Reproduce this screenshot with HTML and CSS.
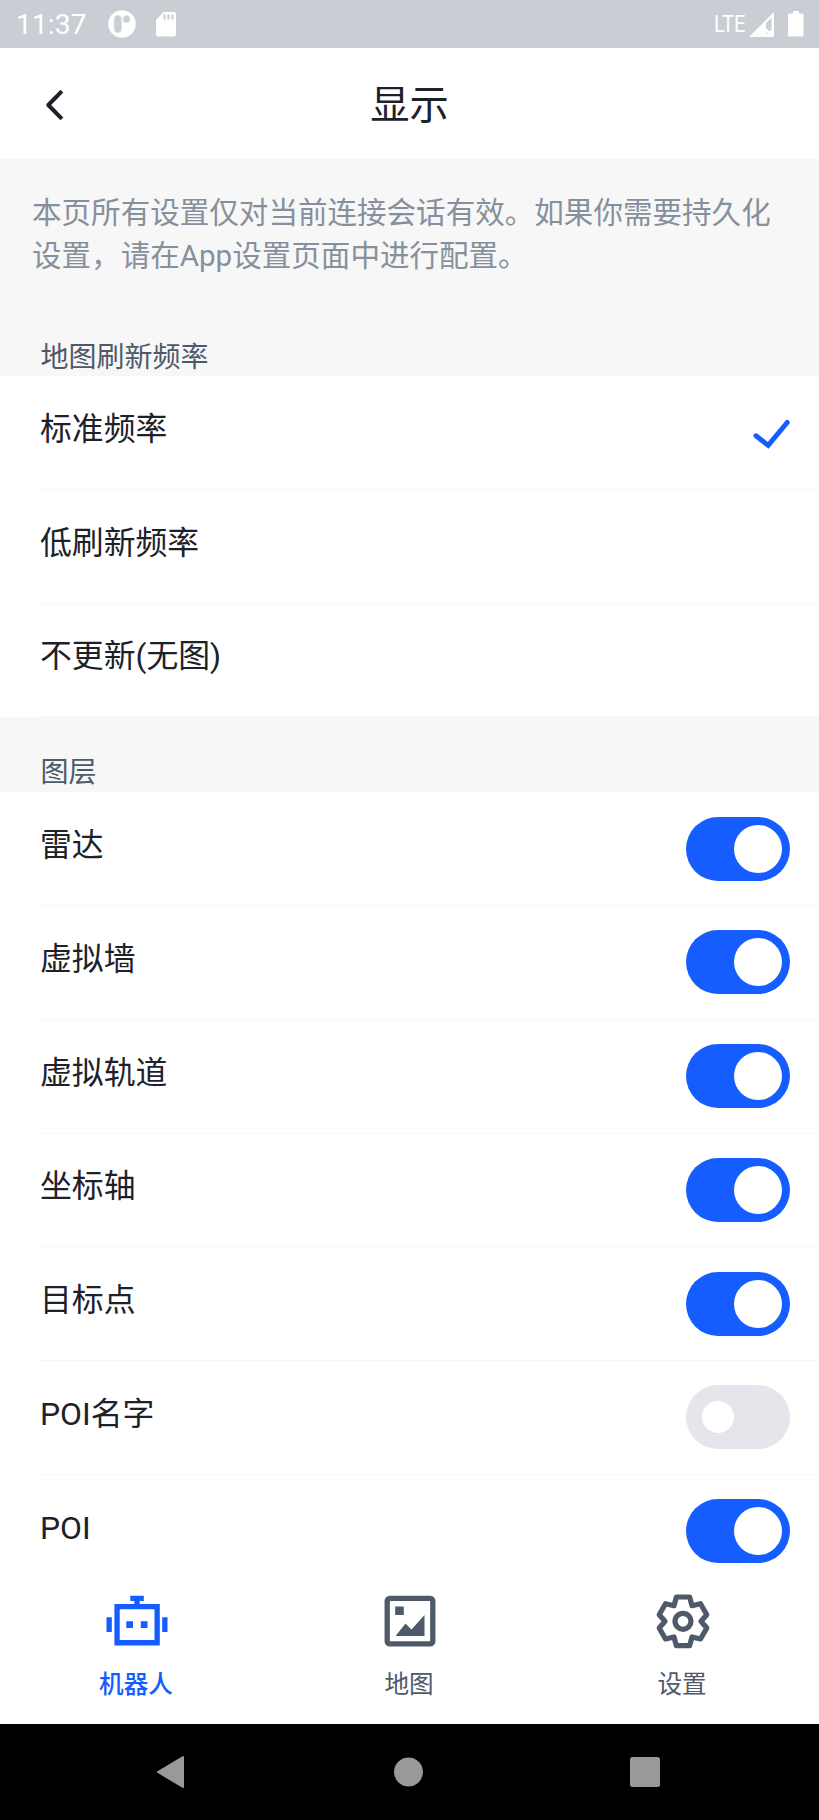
FILE: index.html
```html
<!DOCTYPE html>
<html lang="zh-CN">
<head>
    <meta charset="UTF-8">
    <meta name="viewport" content="width=device-width, initial-scale=1.0">
    <title>显示</title>
    <link rel="stylesheet" href="styles.css">
</head>
<body>
    <div class="status-bar">
        <span class="clock">11:37</span>
        <svg class="app-icon" width="28" height="28" viewBox="0 0 28 28">
            <circle cx="14" cy="14" r="13.7" fill="#fff"/>
            <rect x="6" y="5.3" width="7.6" height="17.4" rx="3.8" fill="#c9cdd4" stroke="#e4e6ea"/>
            <circle cx="18.5" cy="9.2" r="3.6" fill="#c9cdd4" stroke="#e4e6ea"/>
        </svg>
        <svg class="sd-icon" width="20" height="25" viewBox="0 0 20 25">
            <path d="M7.5 0H18a2 2 0 0 1 2 2v20.5a2 2 0 0 1-2 2H2a2 2 0 0 1-2-2V8z" fill="#fff"/>
            <path d="M8.5 2.5v5M12.5 2.5v5M16.5 2.5v5" stroke="#c9cdd4" stroke-width="2.2"/>
        </svg>
        <div class="status-right">
            <span class="lte">LTE</span>
            <svg class="signal" width="25" height="25" viewBox="0 0 25 25">
                <path d="M25 0v25H0z" fill="#fff"/>
                <path d="M22.5 6v12l-2.5 1-3-3V11z" fill="#c9cdd4"/>
                <path d="M17 20.5l2 .5-1.5 1z" fill="#c9cdd4"/>
            </svg>
            <svg class="battery" width="16" height="26" viewBox="0 0 16 26">
                <path d="M5 0h6v2.5h3a1.5 1.5 0 0 1 1.5 1.5v20a1.5 1.5 0 0 1-1.5 1.5H1.5A1.5 1.5 0 0 1 0 24V4a1.5 1.5 0 0 1 1.5-1.5H5z" fill="#fff"/>
            </svg>
        </div>
    </div>

    <header class="header">
        <a class="back" href="#" aria-label="返回">
            <svg width="20" height="32" viewBox="0 0 20 32">
                <path d="M16.5 3.5L4.3 16l12.2 12.500" fill="none" stroke="#1d2129" stroke-width="4" stroke-linejoin="round" stroke-linecap="square"/>
            </svg>
        </a>
        <h1>显示</h1>
    </header>

    <main class="content">
        <p class="notice">本页所有设置仅对当前连接会话有效。如果你需要持久化设置，请在App设置页面中进行配置。</p>

        <h2 class="group-title">地图刷新频率</h2>
        <ul class="list">
            <li class="item">
                <span>标准频率</span>
                <svg class="check" width="38" height="30" viewBox="0 0 38 30">
                    <path d="M4 16.800l12.200 9.600L35.200 3.500" fill="none" stroke="#165dff" stroke-width="5" stroke-linecap="round"/>
                </svg>
            </li>
            <li class="item"><span>低刷新频率</span></li>
            <li class="item"><span>不更新(无图)</span></li>
        </ul>

        <h2 class="group-title layers">图层</h2>
        <ul class="list">
            <li class="item"><span>雷达</span><i class="switch on"></i></li>
            <li class="item"><span>虚拟墙</span><i class="switch on"></i></li>
            <li class="item"><span>虚拟轨道</span><i class="switch on"></i></li>
            <li class="item"><span>坐标轴</span><i class="switch on"></i></li>
            <li class="item"><span>目标点</span><i class="switch on"></i></li>
            <li class="item"><span>POI名字</span><i class="switch"></i></li>
            <li class="item"><span>POI</span><i class="switch on"></i></li>
        </ul>
    </main>

    <nav class="tab-bar">
        <a class="tab active" href="#">
            <svg width="62" height="62" viewBox="0 0 62 62" fill="currentColor">
                <path d="M24.3 5.7h13.5V11h-4.1v3h20.1v41.400H8.400V14h20v-3h-4.100zM13.700 19.300v30.800h34.800V19.300z" fill-rule="evenodd"/>
                <path d="M.5 27.300h5.300V42H.5zM56.200 27.300h5.300V42h-5.300zM20.300 31.200H27V38h-6.700zM34.800 31.200h6.700V38h-6.700z"/>
            </svg>
            <span>机器人</span>
        </a>
        <a class="tab" href="#">
            <svg width="62" height="62" viewBox="0 0 62 62" fill="currentColor">
                <rect x="8.200" y="8.400" width="45.600" height="45.500" rx="2.500" fill="none" stroke="currentColor" stroke-width="5.300"/>
                <path d="M16.200 16.500h8.600v8.500h-8.600zM16.500 46l10-12.500 6 6L45.500 25v21z"/>
            </svg>
            <span>地图</span>
        </a>
        <a class="tab" href="#">
            <svg width="62" height="62" viewBox="0 0 62 62" fill="none" stroke="currentColor" stroke-width="5.200" stroke-linejoin="round">
                <path d="M24.400 7h13.200l2.400 8.700 8.500-2 6.300 11-5.800 6.600 5.800 6.700-6.300 11-8.500-2-2.400 8.700H24.400L22 47l-8.500 2-6.300-11 5.800-6.700-5.800-6.600 6.300-11 8.500 2z"/>
                <circle cx="31" cy="31.300" r="8"/>
            </svg>
            <span>设置</span>
        </a>
    </nav>

    <div class="system-nav">
        <svg width="30" height="34" viewBox="0 0 30 34">
            <path d="M2 17L27 2v30z" fill="#999" stroke="#999" stroke-width="2" stroke-linejoin="round"/>
        </svg>
        <svg width="30" height="30" viewBox="0 0 30 30">
            <circle cx="15.500" cy="15" r="14.500" fill="#999"/>
        </svg>
        <svg width="30" height="30" viewBox="0 0 30 30">
            <rect width="30" height="30" rx="2.500" fill="#999"/>
        </svg>
    </div>
</body>
</html>
```
FILE: styles.css
```css
* {
    box-sizing: border-box;
}
body {
    margin: 0;
    height: 1820px;
    display: flex;
    flex-direction: column;
    overflow: hidden;
    background-color: #fff;
    color: #1d2129;
    font-family: Roboto, "Noto Sans CJK SC", sans-serif;
}
a {
    color: inherit;
    text-decoration: none;
}
svg {
    display: block;
    flex-shrink: 0;
}

/* barra de estado */
.status-bar {
    flex: 0 0 48px;
    display: flex;
    align-items: center;
    padding: 0 15px 0 16px;
    background-color: #c9cdd4;
    color: #fff;
}
.clock {
    width: 92px;
    font-size: 28.3px;
    line-height: 44px;
    padding-top: 2px;
}
.sd-icon {
    margin-left: 20px;
}
.status-right {
    display: flex;
    align-items: center;
    margin-left: auto;
}
.lte {
    font-size: 24.5px;
    line-height: 44px;
    transform: scaleX(0.82);
    transform-origin: right center;
}
.signal {
    margin-left: 4px;
}
.battery {
    margin-left: 14px;
}

.header {
    flex: 0 0 111px;
    display: grid;
    grid-template-columns: 100px 1fr 100px;
    align-items: center;
}
.back {
    padding-left: 44px;
    padding-top: 2px;
}
.header h1 {
    margin: 0;
    padding-top: 4px;
    font-size: 39.3px;
    font-weight: 400;
    line-height: 56px;
    text-align: center;
}

.content {
    flex: 1;
    min-height: 0;
    overflow: hidden;
    background-color: #f7f7f7;
}
.notice {
    margin: 0;
    height: 174px;
    padding: 33px 32px 0;
    font-size: 29.55px;
    line-height: 42.7px;
    color: #86909c;
}
.group-title {
    margin: 0;
    height: 43px;
    padding-left: 40.5px;
    font-size: 28px;
    font-weight: 400;
    line-height: 50px;
    color: #4e5969;
}
.group-title.layers {
    height: 75px;
    padding-top: 31px;
}
.list {
    margin: 0;
    padding: 0 0 0 40px;
    list-style: none;
    background-color: #fff;
}
.item {
    height: 113.75px;
    display: flex;
    align-items: center;
    justify-content: space-between;
    padding-right: 29.5px;
    border-bottom: 1px solid #f7f7f7;
    font-size: 31.85px;
}
.item span {
    padding-bottom: 7px;
    line-height: 48px;
}
.check {
    margin-top: 4px;
}

.switch {
    width: 104px;
    height: 64px;
    padding: 16px;
    border-radius: 32px;
    background-color: #e5e6eb;
}
.switch::before {
    content: "";
    display: block;
    width: 32px;
    height: 32px;
    border-radius: 50%;
    background-color: #fff;
}
.switch.on {
    padding: 8px 8px 8px 48px;
    background-color: #165dff;
}
.switch.on::before {
    width: 48px;
    height: 48px;
}

.tab-bar {
    flex: 0 0 157px;
    display: flex;
    background-color: #fff;
}
.tab {
    flex: 1;
    display: flex;
    flex-direction: column;
    align-items: center;
    padding-top: 23px;
    font-size: 24.6px;
    line-height: 36px;
    color: #4e5969;
}
.tab span {
    margin-top: 15px;
    padding-right: 1px;
}
.tab.active {
    color: #165dff;
    font-weight: 500;
}

.system-nav {
    flex: 0 0 96px;
    display: flex;
    align-items: center;
    justify-content: space-between;
    padding: 0 159px 0 156px;
    background-color: #000;
}
```
